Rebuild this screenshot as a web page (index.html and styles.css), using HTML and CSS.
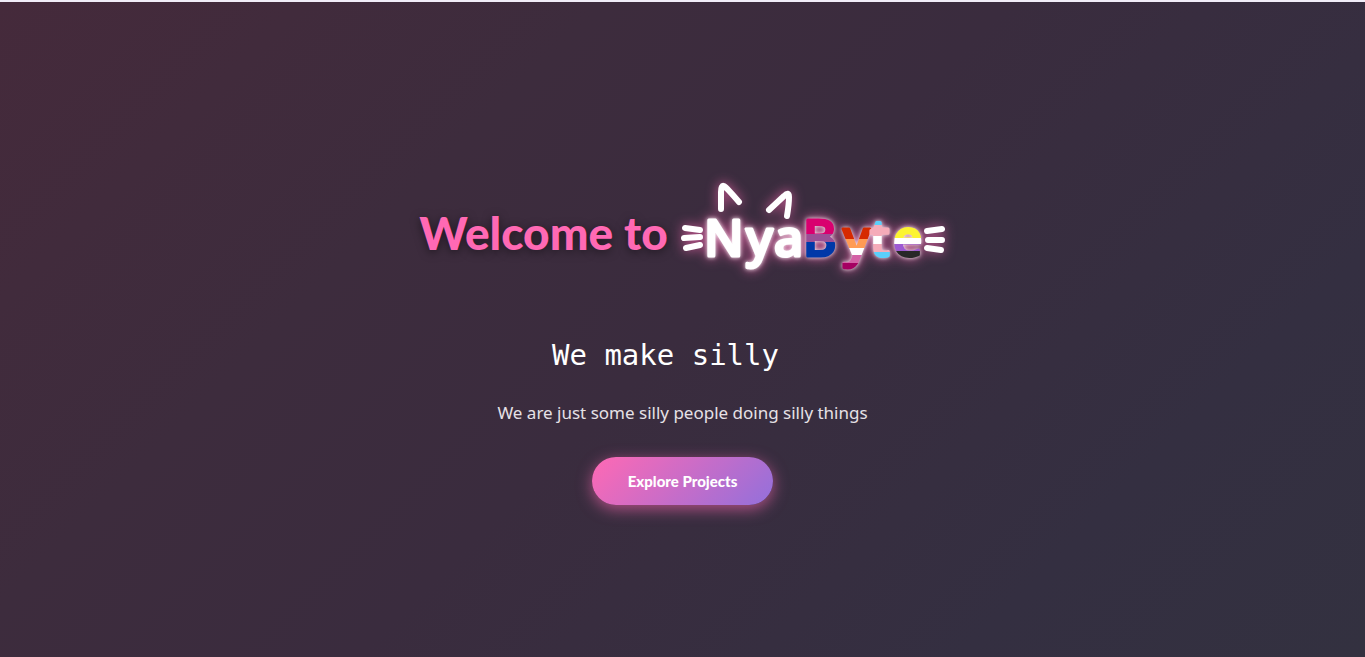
FILE: index.html
```
<!DOCTYPE html>
<html lang="en">
<head>
<meta charset="utf-8">
<meta name="viewport" content="width=device-width, initial-scale=1">
<title>NyaByte</title>
<link rel="stylesheet" href="styles.css">
</head>
<body>
<main class="hero">
  <h1 class="title">
    <span class="welcome">Welcome to</span>
    <svg class="logo" viewBox="0 0 266 96" width="266" height="96" role="img" aria-label="NyaByte">
      <defs>
        <linearGradient id="bi" gradientUnits="userSpaceOnUse" x1="0" y1="39" x2="0" y2="79">
          <stop offset=".4" stop-color="#d9006f"/><stop offset=".4" stop-color="#9b4f96"/>
          <stop offset=".6" stop-color="#9b4f96"/><stop offset=".6" stop-color="#0038a8"/>
        </linearGradient>
        <linearGradient id="lesbian" gradientUnits="userSpaceOnUse" x1="0" y1="52" x2="0" y2="92">
          <stop offset=".2" stop-color="#d62900"/><stop offset=".2" stop-color="#ff9b55"/>
          <stop offset=".42" stop-color="#ff9b55"/><stop offset=".42" stop-color="#fff"/>
          <stop offset=".6" stop-color="#fff"/><stop offset=".6" stop-color="#d461a6"/>
          <stop offset=".8" stop-color="#d461a6"/><stop offset=".8" stop-color="#a50062"/>
        </linearGradient>
        <linearGradient id="trans" gradientUnits="userSpaceOnUse" x1="0" y1="42" x2="0" y2="79">
          <stop offset=".12" stop-color="#5bcffb"/><stop offset=".12" stop-color="#f5abb9"/>
          <stop offset=".4" stop-color="#f5abb9"/><stop offset=".4" stop-color="#fff"/>
          <stop offset=".62" stop-color="#fff"/><stop offset=".62" stop-color="#f5abb9"/>
          <stop offset=".85" stop-color="#f5abb9"/><stop offset=".85" stop-color="#5bcffb"/>
        </linearGradient>
        <linearGradient id="enby" gradientUnits="userSpaceOnUse" x1="0" y1="51" x2="0" y2="79">
          <stop offset=".28" stop-color="#fcf431"/><stop offset=".28" stop-color="#fff"/>
          <stop offset=".5" stop-color="#fff"/><stop offset=".5" stop-color="#9d59d2"/>
          <stop offset=".74" stop-color="#9d59d2"/><stop offset=".74" stop-color="#282828"/>
        </linearGradient>
      </defs>
      <g class="strokes">
        <path d="M41 30V13Q41 6 44 7Q47 9 59 23"/>
        <path d="M89 31L104 17Q109 12 109 18Q109 25 107 37"/>
        <path d="M5 49L20 51M4 59L20 58M6 69L20 66"/>
        <path d="M247 52L262 50M248 61H262M247 69L261 71"/>
      </g>
      <text class="letters" y="77" x="24 66 94 123 163 190 213">Nya<tspan class="bi">B</tspan><tspan class="lesbian">y</tspan><tspan class="trans">t</tspan><tspan class="enby">e</tspan></text>
    </svg>
  </h1>
  <p class="typed">We make silly</p>
  <p class="tagline">We are just some silly people doing silly things</p>
  <button class="explore" type="button">Explore Projects</button>
</main>
</body>
</html>
```
FILE: styles.css
```
* { box-sizing: border-box; }
body {
  margin: 0;
  font-family: Lato, "Noto Sans", sans-serif;
  color: #fff;
}
.hero {
  min-height: 100vh;
  display: flex;
  flex-direction: column;
  align-items: center;
  justify-content: center;
  padding: 24px 16px 0;
  border-top: 2px solid #f1edf8;
  background: linear-gradient(135deg, #452a3b 0%, #3d2c3d 30%, #3a2c3e 50%, #342f41 80%, #333140 100%);
}
.title {
  display: flex;
  flex-wrap: wrap;
  align-items: center;
  justify-content: center;
  gap: 12px;
  margin: 0 0 56px;
  font-size: 46px;
  line-height: 72px;
}
.welcome {
  padding-top: 12px;
  font-weight: 900;
  color: #ff69b4;
  text-shadow: 0 2px 10px rgba(0, 0, 0, .5);
}
.logo {
  overflow: visible;
  filter: drop-shadow(0 0 6px rgba(255, 105, 180, .75));
}
.strokes {
  fill: none;
  stroke: #fff;
  stroke-width: 6px;
  stroke-linecap: round;
  stroke-linejoin: round;
}
.letters {
  font-family: "Noto Sans", sans-serif;
  font-size: 51px;
  font-weight: 500;
  fill: #fff;
  stroke: #fff;
  stroke-width: 3px;
  stroke-linejoin: round;
  filter: drop-shadow(0 0 2px rgba(255, 255, 255, .9));
}
.bi { fill: url(#bi); stroke: url(#bi); }
.lesbian { fill: url(#lesbian); stroke: url(#lesbian); }
.trans { fill: url(#trans); stroke: url(#trans); }
.enby { fill: url(#enby); stroke: url(#enby); }
.typed {
  margin: 0 0 18px;
  padding-right: 34px;
  font-family: "DejaVu Sans Mono", monospace;
  font-size: 29px;
  line-height: 48px;
}
.tagline {
  margin: 0 0 28px;
  font-family: "Noto Sans", sans-serif;
  font-size: 17px;
  line-height: 32px;
  color: #e6e1e6;
}
.explore {
  padding: 12px 36px;
  border: 0;
  border-radius: 24px;
  font-family: Lato, sans-serif;
  font-size: 15px;
  font-weight: 900;
  line-height: 24px;
  color: #fff;
  background: linear-gradient(135deg, #ff69b4, #9370db);
  box-shadow: 0 4px 15px rgba(255, 105, 180, .6);
  cursor: pointer;
}
```
